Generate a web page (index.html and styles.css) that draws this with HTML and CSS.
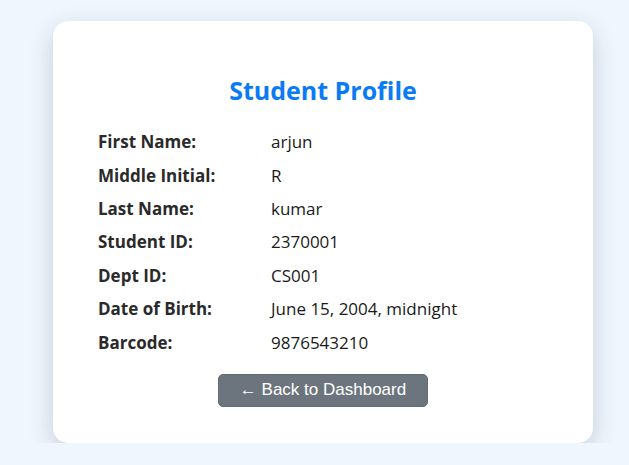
FILE: index.html
```html
<!DOCTYPE html>
<html lang="en">
<head>
<meta charset="utf-8">
<title>Student Profile</title>
<link rel="stylesheet" href="styles.css">
</head>
<body>
<div class="card">
  <h2 class="title">Student Profile</h2>
  <div class="rows">
    <div class="row"><span class="label">First Name:</span><span class="value">arjun</span></div>
    <div class="row"><span class="label">Middle Initial:</span><span class="value">R</span></div>
    <div class="row"><span class="label">Last Name:</span><span class="value">kumar</span></div>
    <div class="row"><span class="label">Student ID:</span><span class="value">2370001</span></div>
    <div class="row"><span class="label">Dept ID:</span><span class="value">CS001</span></div>
    <div class="row"><span class="label">Date of Birth:</span><span class="value">June 15, 2004, midnight</span></div>
    <div class="row"><span class="label">Barcode:</span><span class="value">9876543210</span></div>
  </div>
  <div class="actions">
    <button class="btn">&larr; Back to Dashboard</button>
  </div>
</div>
</body>
</html>
```
FILE: styles.css
```css
html, body {
  margin: 0;
  padding: 0;
}
body {
  background: #eff6fe;
  font-family: "Open Sans", "Noto Sans", sans-serif;
  color: #1f1f1f;
  padding: 21px 0 0 53px;
}
.card {
  box-sizing: border-box;
  width: 540px;
  height: 422px;
  background: #ffffff;
  border-radius: 15px;
  box-shadow: 0 8px 24px rgba(30, 45, 70, 0.2);
  padding: 53px 45px 0 45px;
}
.title {
  margin: 0 0 19px 0;
  text-align: center;
  color: #0a7bf5;
  font-size: 25px;
  font-weight: 700;
  line-height: 32px;
}
.rows {
  display: flex;
  flex-direction: column;
}
.row {
  display: flex;
  height: 33.4px;
  align-items: center;
  font-size: 17px;
}
.label {
  width: 173px;
  font-weight: 700;
  color: #2a2a2a;
}
.value {
  color: #1a1a1a;
}
.actions {
  display: flex;
  justify-content: center;
  margin-top: 15px;
}
.btn {
  width: 210px;
  height: 33px;
  background: #6c757d;
  color: #ffffff;
  border: 1px solid #636b72;
  border-radius: 5px;
  font-family: "Liberation Sans", Arial, sans-serif;
  font-size: 17px;
  padding: 0;
}
```
